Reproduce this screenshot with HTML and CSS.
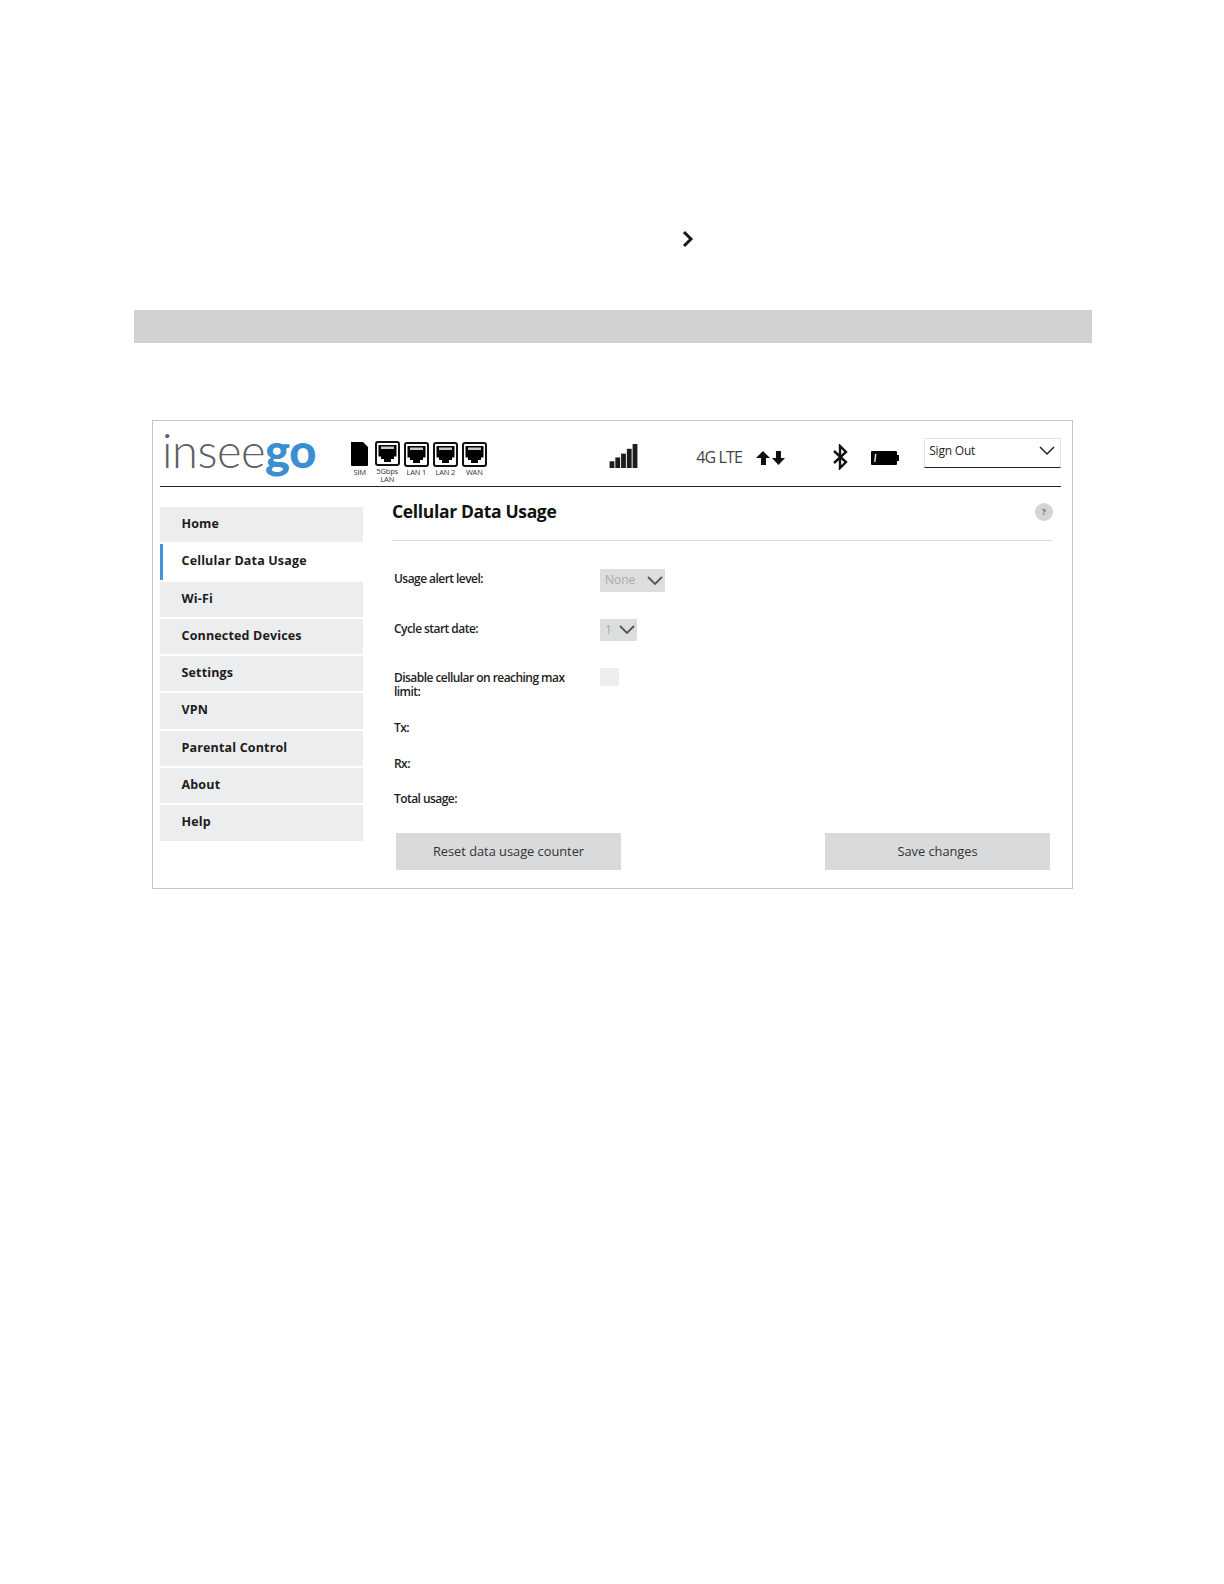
FILE: index.html
```html
<!DOCTYPE html>
<html lang="en">
<head>
<meta charset="utf-8">
<title>Cellular Data Usage</title>
<link rel="stylesheet" href="styles.css">
</head>
<body>
<svg class="chevron" viewBox="0 0 12 18" width="12" height="18"><path d="M2 2l7 7-7 7" fill="none" stroke="#1a1a1a" stroke-width="3"/></svg>
<div class="band"></div>
<div class="panel">
  <header class="top">
    <div class="logo">insee<b>go</b></div>
    <div class="ports">
      <div class="port sim">
        <svg viewBox="0 0 19 25" width="19" height="25"><path d="M1 1h12l5 5v18a1 1 0 0 1-1 1H2a1 1 0 0 1-1-1z" fill="#000"/></svg>
        <span>SIM</span>
      </div>
      <div class="port">
        <svg viewBox="0 0 25 25" width="25" height="25"><use href="#rj"/></svg>
        <span>5Gbps<br>LAN</span>
      </div>
      <div class="port low">
        <svg viewBox="0 0 25 25" width="25" height="25"><use href="#rj"/></svg>
        <span>LAN 1</span>
      </div>
      <div class="port low">
        <svg viewBox="0 0 25 25" width="25" height="25"><use href="#rj"/></svg>
        <span>LAN 2</span>
      </div>
      <div class="port low">
        <svg viewBox="0 0 25 25" width="25" height="25"><use href="#rj"/></svg>
        <span>WAN</span>
      </div>
    </div>
    <svg class="signal" viewBox="0 0 30 25" width="30" height="24" fill="#1c1c1c"><rect x="0" y="18" width="5" height="7"/><rect x="6" y="14" width="5" height="11"/><rect x="12" y="10" width="5" height="15"/><rect x="18" y="5" width="5" height="20"/><rect x="24" y="0" width="5" height="25"/></svg>
    <span class="net">4G LTE</span>
    <svg class="arrows" viewBox="0 0 30 16" width="30" height="16" fill="#111"><path d="M7 1l7 7h-4v7H5V8H0z"/><path d="M20 1h5v7h4l-6.500 7L16 8h4z"/></svg>
    <svg class="bt" viewBox="0 0 16 26" width="16" height="26"><path d="M2 7l12 11-6 6V2l6 6L2 19" fill="none" stroke="#111" stroke-width="2.400"/></svg>
    <svg class="batt" viewBox="0 0 28 14" width="28" height="14"><rect x="0" y="0" width="26" height="14" rx="1" fill="#000"/><rect x="26" y="4" width="2" height="6" fill="#000"/><path d="M3 11l1-8h1.500l-1 8z" fill="#ddd"/></svg>
    <div class="signout"><span>Sign Out</span><svg viewBox="0 0 16 10" width="16" height="10"><path d="M1 1l7 7 7-7" fill="none" stroke="#222" stroke-width="1.500"/></svg></div>
  </header>
  <div class="body">
    <nav class="menu">
      <a>Home</a>
      <a class="on">Cellular Data Usage</a>
      <a>Wi-Fi</a>
      <a>Connected Devices</a>
      <a>Settings</a>
      <a>VPN</a>
      <a>Parental Control</a>
      <a>About</a>
      <a>Help</a>
    </nav>
    <main class="main">
      <div class="title"><h1>Cellular Data Usage</h1><span class="help">?</span></div>
      <div class="row r1"><label>Usage alert level:</label><div class="sel w65"><span>None</span><svg viewBox="0 0 16 10" width="16" height="10"><path d="M1 1l7 7 7-7" fill="none" stroke="#555" stroke-width="1.800"/></svg></div></div>
      <div class="row r2"><label>Cycle start date:</label><div class="sel w37"><span>1</span><svg viewBox="0 0 16 10" width="16" height="10"><path d="M1 1l7 7 7-7" fill="none" stroke="#555" stroke-width="1.800"/></svg></div></div>
      <div class="row r3"><label>Disable cellular on reaching max limit:</label><div class="check"></div></div>
      <div class="stat s1">Tx:</div>
      <div class="stat s2">Rx:</div>
      <div class="stat s3">Total usage:</div>
      <div class="actions"><button>Reset data usage counter</button><button>Save changes</button></div>
    </main>
  </div>
  <svg class="defs" width="0" height="0"><defs><g id="rj"><rect x="1" y="1" width="23" height="23" rx="2" fill="#fff" stroke="#111" stroke-width="2"/><path d="M3.500 4h18v11.500h-2.500v2.500h-3v3h-7v-3H6v-2.500H3.500z" fill="#000"/><path d="M6 5.500h13v2.500H6z" fill="#c8c8c8"/></g></defs></svg>
</div>
</body>
</html>
```
FILE: styles.css
```css
* { box-sizing: border-box; }
html, body { margin: 0; background: #fff; }
body { height: 1584px; overflow: hidden; font-family: "Open Sans", "Noto Sans", sans-serif; color: #111; }
.chevron { display: block; margin: 230px 0 0 682px; }
.band { height: 33px; margin: 62px 132px 0 134px; background: #d1d1d1; }
.panel { width: 921px; height: 469px; margin: 77px 0 0 152px; border: 1px solid #c4c4c4; padding: 0 11px 0 7px; background: #fff; }
.top { display: flex; align-items: flex-start; height: 66px; border-bottom: 1.500px solid #222; }
.logo { width: 187px; padding: 3px 0 0 2px; font-family: Lato, "Open Sans", sans-serif; font-size: 47px; line-height: 52px; letter-spacing: -.45px; font-weight: 300; color: #5d5f63; white-space: nowrap; }
.logo b { font-weight: 900; color: #3a8fd0; }
.ports { display: flex; align-items: flex-start; width: 263px; padding-top: 20px; }
.port { width: 29px; display: flex; flex-direction: column; align-items: center; font-size: 7.500px; line-height: 8px; text-align: center; color: #333; letter-spacing: -.2px; }
.port svg { display: block; }
.port span { margin-top: 1px; }
.port.sim { width: 26px; }
.port.sim span { margin-top: 2px; }
.port.low { padding-top: 1px; }
.signal { margin-top: 23px; }
.net { width: 60px; margin: 25px 0 0 57px; font-size: 16px; line-height: 22px; letter-spacing: -.9px; color: #444; }
.arrows { margin-top: 29px; }
.bt { margin: 23px 0 0 46px; }
.batt { margin: 30px 0 0 23px; }
.signout { display: flex; align-items: center; justify-content: space-between; width: 137px; height: 30px; margin: 17px 0 0 25px; padding: 0 5px 5px 4px; border: 1px solid #e4e4e4; border-bottom: 1.500px solid #222; font-size: 12px; letter-spacing: -.2px; color: #222; }
.body { display: flex; }
.menu { width: 203px; padding-top: 20px; display: flex; flex-direction: column; gap: 2px; }
.menu a { height: 35.300px; padding-left: 21.500px; line-height: 33px; background: #ecedee; font-size: 12.500px; font-weight: 700; letter-spacing: .16px; color: #1c1c1c; }
.menu a.on { background: #fff; box-shadow: inset 3px 0 0 #4a8ee0; }
.main { width: 661px; margin-left: 29px; }
.title { display: flex; justify-content: space-between; align-items: center; height: 54px; padding: 0; border-bottom: 1px solid #dcdcdc; }
h1 { margin: 0 0 6px; font-size: 17.500px; line-height: 24px; font-weight: 700; letter-spacing: -.35px; color: #111; }
.help { width: 18px; height: 18px; margin-bottom: 4px; border-radius: 50%; background: #d4d4d4; font-size: 8px; font-weight: 700; line-height: 18px; text-align: center; color: #666; }
.row { display: flex; align-items: flex-start; padding-left: 2px; }
.row label { width: 206px; padding-top: 3px; font-size: 12px; line-height: 14px; font-weight: 600; letter-spacing: -.55px; color: #222; }
.r1 { margin-top: 28px; }
.r2 { margin-top: 27px; }
.r3 { margin-top: 27px; }
.r3 label { width: 206px; padding-right: 30px; }
.sel { display: flex; align-items: center; justify-content: space-between; background: #dcdddd; font-size: 12px; color: #aaa; padding: 0 2px 0 5px; }
.sel span { margin-bottom: 2px; }
.w65 { width: 65px; height: 23px; }
.w37 { width: 37px; height: 22px; }
.check { width: 19px; height: 18px; background: #eeeeee; }
.stat { padding-left: 2px; font-size: 12px; line-height: 14px; font-weight: 600; letter-spacing: -.55px; color: #222; }
.s1 { margin-top: 22px; }
.s2 { margin-top: 22px; }
.s3 { margin-top: 21px; }
.actions { display: flex; justify-content: space-between; margin: 27px 3px 0 4px; }
button { width: 225px; height: 37px; border: 0; padding: 0 0 2px; background: #d9dadb; font: 400 12.800px "Open Sans", sans-serif; color: #333; }
.defs { position: absolute; }
```
